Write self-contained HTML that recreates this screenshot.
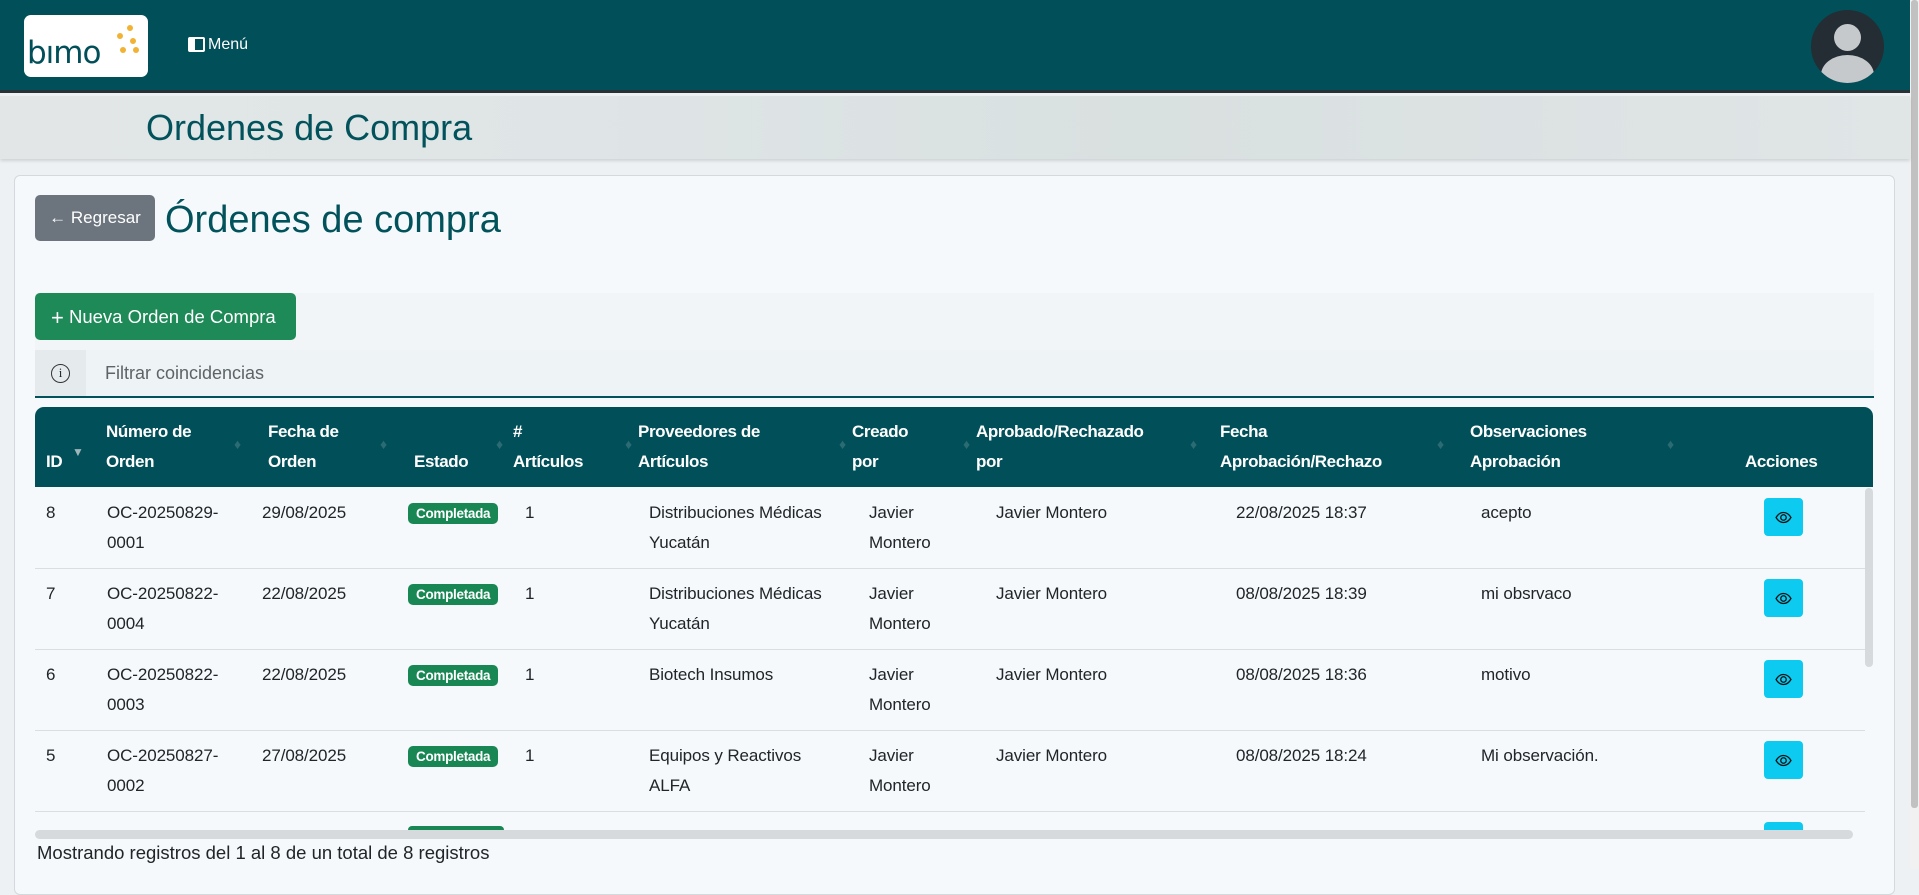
<!DOCTYPE html>
<html><head><meta charset="utf-8"><style>
*{margin:0;padding:0;box-sizing:border-box}
body{width:1919px;height:869px;overflow:hidden;background:#edf1f3;font-family:"Liberation Sans",sans-serif;position:relative;color:#212529}
.abs{position:absolute}
.nav{left:0;top:0;width:1910px;height:93px;background:#014f59;border-bottom:3px solid #263236}
.logo{left:24px;top:15px;width:124px;height:62px;background:#fff;border-radius:7px}
.banner{left:0;top:96px;width:1910px;height:63px;background:linear-gradient(90deg,#e2e6e7 0%,#dfe5e6 30%,#d9e0e0 60%,#e0e5e6 100%);box-shadow:0 2px 3px rgba(0,0,0,.12)}
.card{left:14px;top:175px;width:1881px;height:720px;background:#f5f9fb;border:1px solid #d3d9dc;border-radius:6px}
.teal{color:#02525c}
.th{color:#fff;font-weight:bold;font-size:17px;line-height:30px;letter-spacing:-.4px}
.td{font-size:17px;line-height:30px;color:#212529;letter-spacing:-.1px}
.badge{background:#198754;color:#fff;font-weight:bold;font-size:13.5px;border-radius:5px;padding:3px 8px;letter-spacing:-.3px}
.eye{width:39px;height:38px;background:#0dcaf0;border-radius:4px}
.line{left:35px;width:1830px;height:1px;background:#d9dee1}
.sort{width:8px;height:18px;color:#2c6b73;font-size:14px}
</style></head><body>
<div class="abs nav"></div>
<div class="abs logo">
 <div class="abs" style="left:3px;top:20px;font-size:31px;color:#014f59;letter-spacing:-1px;font-family:'DejaVu Sans',sans-serif">bımo</div>
 <svg class="abs" style="left:80px;top:4px" width="44" height="54"><g fill="#f2b233"><circle cx="26" cy="9" r="3"/><circle cx="16" cy="17" r="3"/><circle cx="29" cy="22" r="3"/><circle cx="19" cy="31" r="3"/><circle cx="32" cy="31" r="3"/></g></svg>
</div>
<div class="abs" style="left:188px;top:37px;width:17px;height:15px;border:2px solid #fff;border-radius:2px"><div style="width:5px;height:100%;background:#fff"></div></div>
<div class="abs" style="left:208px;top:36px;color:#fff;font-size:16px">Menú</div>
<div class="abs" style="left:1811px;top:10px;width:73px;height:73px;border-radius:50%;background:#232d33;overflow:hidden">
 <div class="abs" style="left:23px;top:14px;width:27px;height:27px;border-radius:50%;background:#c6c9cc"></div>
 <div class="abs" style="left:10px;top:45px;width:53px;height:40px;border-radius:50%;background:#c6c9cc"></div>
</div>
<div class="abs" style="left:1910px;top:0;width:9px;height:869px;background:#f1f1f1"></div>
<div class="abs" style="left:1911px;top:0;width:7px;height:808px;background:#c1c1c1;border-radius:3px"></div>
<div class="abs banner"></div>
<div class="abs teal" style="left:146px;top:107px;font-size:36px">Ordenes de Compra</div>
<div class="abs card"></div>
<div class="abs" style="left:35px;top:195px;width:120px;height:46px;background:#6c757d;border-radius:5px;color:#fff;font-size:17px;line-height:46px;text-align:center">← Regresar</div>
<div class="abs teal" style="left:165px;top:199px;font-size:38px">Órdenes de compra</div>
<div class="abs" style="left:35px;top:293px;width:1839px;height:105px;background:#f1f5f7"></div>
<div class="abs" style="left:35px;top:293px;width:261px;height:47px;background:#1e8a57;border-radius:5px;color:#fff;font-size:18.5px;line-height:47px;padding-left:16px;white-space:nowrap"><span style="font-size:22px;vertical-align:-2px">+</span> Nueva Orden de Compra</div>
<div class="abs" style="left:35px;top:350px;width:1839px;height:48px;background:#eef3f5;border-bottom:2px solid #02525c"></div>
<div class="abs" style="left:35px;top:350px;width:51px;height:46px;background:#e5eaed"></div>
<div class="abs" style="left:51px;top:364px;width:19px;height:19px;border:1.5px solid #333;border-radius:50%;font-size:13px;line-height:16px;text-align:center;font-family:'Liberation Serif',serif">i</div>
<div class="abs" style="left:105px;top:363px;font-size:18px;color:#5d6468">Filtrar coincidencias</div>
<div class="abs" style="left:35px;top:407px;width:1838px;height:80px;background:#014f59;border-radius:9px 9px 0 0"></div>
<div class="abs th" style="left:46px;top:447px">ID</div>
<div class="abs th" style="left:106px;top:417px">Número de<br>Orden</div>
<div class="abs th" style="left:268px;top:417px">Fecha de<br>Orden</div>
<div class="abs th" style="left:414px;top:447px">Estado</div>
<div class="abs th" style="left:513px;top:417px">#<br>Artículos</div>
<div class="abs th" style="left:638px;top:417px">Proveedores de<br>Artículos</div>
<div class="abs th" style="left:852px;top:417px">Creado<br>por</div>
<div class="abs th" style="left:976px;top:417px">Aprobado/Rechazado<br>por</div>
<div class="abs th" style="left:1220px;top:417px">Fecha<br>Aprobación/Rechazo</div>
<div class="abs th" style="left:1470px;top:417px">Observaciones<br>Aprobación</div>
<div class="abs th" style="left:1745px;top:447px">Acciones</div>
<div class="abs" style="left:72px;top:445px;color:#9fb6ba;font-size:12px">▼</div>
<div class="abs sort" style="left:234px;top:436px">♦</div>
<div class="abs sort" style="left:380px;top:436px">♦</div>
<div class="abs sort" style="left:496px;top:436px">♦</div>
<div class="abs sort" style="left:625px;top:436px">♦</div>
<div class="abs sort" style="left:839px;top:436px">♦</div>
<div class="abs sort" style="left:963px;top:436px">♦</div>
<div class="abs sort" style="left:1190px;top:436px">♦</div>
<div class="abs sort" style="left:1437px;top:436px">♦</div>
<div class="abs sort" style="left:1667px;top:436px">♦</div>

<div class="abs line" style="top:568px"></div>
<div class="abs line" style="top:649px"></div>
<div class="abs line" style="top:730px"></div>
<div class="abs line" style="top:811px"></div>

<div class="abs td" style="left:46px;top:498px">8</div>
<div class="abs td" style="left:107px;top:498px">OC-20250829-<br>0001</div>
<div class="abs td" style="left:262px;top:498px">29/08/2025</div>
<div class="abs badge" style="left:408px;top:503px">Completada</div>
<div class="abs td" style="left:525px;top:498px">1</div>
<div class="abs td" style="left:649px;top:498px">Distribuciones Médicas<br>Yucatán</div>
<div class="abs td" style="left:869px;top:498px">Javier<br>Montero</div>
<div class="abs td" style="left:996px;top:498px">Javier Montero</div>
<div class="abs td" style="left:1236px;top:498px">22/08/2025 18:37</div>
<div class="abs td" style="left:1481px;top:498px">acepto</div>

<div class="abs td" style="left:46px;top:579px">7</div>
<div class="abs td" style="left:107px;top:579px">OC-20250822-<br>0004</div>
<div class="abs td" style="left:262px;top:579px">22/08/2025</div>
<div class="abs badge" style="left:408px;top:584px">Completada</div>
<div class="abs td" style="left:525px;top:579px">1</div>
<div class="abs td" style="left:649px;top:579px">Distribuciones Médicas<br>Yucatán</div>
<div class="abs td" style="left:869px;top:579px">Javier<br>Montero</div>
<div class="abs td" style="left:996px;top:579px">Javier Montero</div>
<div class="abs td" style="left:1236px;top:579px">08/08/2025 18:39</div>
<div class="abs td" style="left:1481px;top:579px">mi obsrvaco</div>

<div class="abs td" style="left:46px;top:660px">6</div>
<div class="abs td" style="left:107px;top:660px">OC-20250822-<br>0003</div>
<div class="abs td" style="left:262px;top:660px">22/08/2025</div>
<div class="abs badge" style="left:408px;top:665px">Completada</div>
<div class="abs td" style="left:525px;top:660px">1</div>
<div class="abs td" style="left:649px;top:660px">Biotech Insumos</div>
<div class="abs td" style="left:869px;top:660px">Javier<br>Montero</div>
<div class="abs td" style="left:996px;top:660px">Javier Montero</div>
<div class="abs td" style="left:1236px;top:660px">08/08/2025 18:36</div>
<div class="abs td" style="left:1481px;top:660px">motivo</div>

<div class="abs td" style="left:46px;top:741px">5</div>
<div class="abs td" style="left:107px;top:741px">OC-20250827-<br>0002</div>
<div class="abs td" style="left:262px;top:741px">27/08/2025</div>
<div class="abs badge" style="left:408px;top:746px">Completada</div>
<div class="abs td" style="left:525px;top:741px">1</div>
<div class="abs td" style="left:649px;top:741px">Equipos y Reactivos<br>ALFA</div>
<div class="abs td" style="left:869px;top:741px">Javier<br>Montero</div>
<div class="abs td" style="left:996px;top:741px">Javier Montero</div>
<div class="abs td" style="left:1236px;top:741px">08/08/2025 18:24</div>
<div class="abs td" style="left:1481px;top:741px">Mi observación.</div>

<svg width="0" height="0" style="position:absolute"><defs><symbol id="e" viewBox="0 0 16 16"><path d="M1 8C3 4.5 5.5 3.3 8 3.3S13 4.5 15 8C13 11.5 10.5 12.7 8 12.7S3 11.5 1 8Z" fill="none" stroke="#111" stroke-width="1.2"/><circle cx="8" cy="8" r="2.6" fill="none" stroke="#111" stroke-width="1.2"/></symbol></defs></svg>
<div class="abs eye" style="left:1764px;top:498px"><svg width="17" height="17" style="margin:11px"><use href="#e"/></svg></div>
<div class="abs eye" style="left:1764px;top:579px"><svg width="17" height="17" style="margin:11px"><use href="#e"/></svg></div>
<div class="abs eye" style="left:1764px;top:660px"><svg width="17" height="17" style="margin:11px"><use href="#e"/></svg></div>
<div class="abs eye" style="left:1764px;top:741px"><svg width="17" height="17" style="margin:11px"><use href="#e"/></svg></div>
<div class="abs" style="left:408px;top:826px;width:96px;height:4px;background:#198754;border-radius:4px 4px 0 0"></div>
<div class="abs" style="left:1764px;top:822px;width:39px;height:8px;background:#0dcaf0;border-radius:4px 4px 0 0"></div>

<div class="abs" style="left:35px;top:830px;width:1818px;height:9px;background:#d6dadc;border-radius:5px"></div>
<div class="abs" style="left:1865px;top:488px;width:8px;height:179px;background:#d6dadc;border-radius:4px"></div>
<div class="abs" style="left:37px;top:842px;font-size:18.5px;color:#212529">Mostrando registros del 1 al 8 de un total de 8 registros</div>
</body></html>
